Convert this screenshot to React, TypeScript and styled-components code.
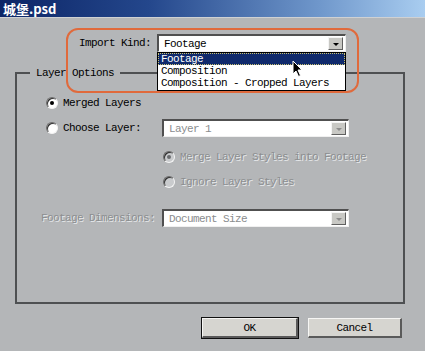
import React from 'react';
import styled, { createGlobalStyle, css } from 'styled-components';

const GlobalStyle = createGlobalStyle`
    html, body {
        margin: 0;
        padding: 0;
        background: #b4b6b8;
    }
    body {
        font-family: "Liberation Mono", "DejaVu Sans Mono", monospace;
        font-size: 11px;
        letter-spacing: -0.6px;
        color: #000;
    }
`;

const Window = styled.div`
    position: relative;
    width: 425px;
    height: 351px;
    overflow: hidden;
    background: #b4b6b8;
    display: flex;
    flex-direction: column;
`;

const TitleBar = styled.div`
    height: 18px;
    display: flex;
    align-items: center;
    padding-left: 3px;
    background: linear-gradient(90deg, #0c2566 0%, #24478c 35%, #6f97cb 75%, #a9cdf0 100%);
    border-bottom: 1px solid #cfd1d3;
    box-sizing: border-box;
`;

const Title = styled.span`
    font-family: "Noto Sans CJK SC", "Noto Sans", sans-serif;
    font-weight: 700;
    font-size: 13px;
    letter-spacing: 0;
    color: #fff;
    line-height: 1;
`;

const Body = styled.div`
    padding-top: 16px;
    display: flex;
    flex-direction: column;
`;

const ImportRow = styled.div`
    display: flex;
    align-items: center;
    gap: 6px;
    margin-left: 79px;
`;

const Label = styled.span<{ $disabled?: boolean; $width?: number }>`
    white-space: nowrap;
    line-height: 14px;
    ${(p) => p.$width && css`width: ${p.$width}px; flex: none;`}
    ${(p) =>
        p.$disabled &&
        css`
            color: #8c8e90;
            text-shadow: 1px 1px 0 #e6e8ea;
        `}
`;

const SelectWrap = styled.div`
    position: relative;
    flex: none;
`;

const SelectBox = styled.div<{ $width: number; $disabled?: boolean }>`
    width: ${(p) => p.$width}px;
    height: 18px;
    box-sizing: border-box;
    background: #fff;
    border-top: 2px solid #505050;
    border-left: 2px solid #505050;
    border-right: 1px solid #f0f0f0;
    border-bottom: 1px solid #f0f0f0;
    display: flex;
    align-items: center;
    padding-left: 5px;
    color: ${(p) => (p.$disabled ? '#8a8c8e' : '#000')};
`;

const SelectText = styled.span`
    flex: 1;
    line-height: 14px;
`;

const DropButton = styled.div<{ $disabled?: boolean }>`
    width: 15px;
    height: 13px;
    margin-right: 2px;
    box-sizing: border-box;
    background: #c8c8c4;
    border-top: 1px solid #f4f4f4;
    border-left: 1px solid #f4f4f4;
    border-right: 1px solid #606060;
    border-bottom: 1px solid #606060;
    display: flex;
    align-items: center;
    justify-content: center;

    &::after {
        content: '';
        border-left: 3px solid transparent;
        border-right: 3px solid transparent;
        border-top: 3px solid ${(p) => (p.$disabled ? '#8c8c8c' : '#000')};
        margin-top: 1px;
    }
`;

const DropList = styled.div`
    position: absolute;
    top: 18px;
    left: 0;
    width: 189px;
    box-sizing: border-box;
    background: #fff;
    border: 1px solid #000;
    padding: 0 0 1px;
    z-index: 2;
`;

const DropItem = styled.div<{ $active?: boolean }>`
    height: 12px;
    line-height: 12px;
    padding-left: 3px;
    white-space: nowrap;
    box-sizing: border-box;
    ${(p) =>
        p.$active &&
        css`
            background: #102a6c;
            color: #fff;
            outline: 1px dotted #c8c070;
            outline-offset: -1px;
        `}
`;

const Group = styled.fieldset`
    margin: 14px 20px 0 15px;
    padding: 0;
    min-width: 0;
    border: 2px solid #4e5052;
`;

const Legend = styled.legend`
    margin-left: 13px;
    padding: 0 6px;
    line-height: 14px;
`;

const GroupInner = styled.div`
    display: flex;
    flex-direction: column;
    padding: 14px 0 75px 29px;
`;

const Row = styled.div<{ $indent?: number; $gap?: number }>`
    display: flex;
    align-items: center;
    height: 18px;
    margin-left: ${(p) => p.$indent ?? 0}px;
    margin-top: ${(p) => p.$gap ?? 0}px;
`;

const Radio = styled.span<{ $checked?: boolean; $disabled?: boolean }>`
    width: 12px;
    height: 12px;
    flex: none;
    box-sizing: border-box;
    border-radius: 50%;
    margin-right: 5px;
    background: ${(p) => (p.$disabled ? '#c9cbcd' : '#fff')};
    border: 1px solid;
    border-color: #6a6a6a #f4f4f4 #f4f4f4 #6a6a6a;
    box-shadow: inset 1px 1px 0 #303030;
    display: flex;
    align-items: center;
    justify-content: center;

    &::after {
        content: '';
        display: ${(p) => (p.$checked ? 'block' : 'none')};
        width: 4px;
        height: 4px;
        border-radius: 50%;
        background: ${(p) => (p.$disabled ? '#6a6c6e' : '#000')};
    }
`;

const ButtonRow = styled.div`
    display: flex;
    justify-content: flex-end;
    gap: 10px;
    margin: 14px 23px 0 0;
`;

const Button = styled.div<{ $default?: boolean }>`
    width: ${(p) => (p.$default ? 96 : 94)}px;
    height: 20px;
    box-sizing: border-box;
    background: #d6d5d0;
    border-top: 1px solid #f6f6f4;
    border-left: 1px solid #f6f6f4;
    border-right: 2px solid #5a5a5a;
    border-bottom: 2px solid #5a5a5a;
    display: flex;
    align-items: center;
    justify-content: center;
    line-height: 14px;
    ${(p) =>
        p.$default &&
        css`
            outline: 1px solid #111;
        `}
`;

const Highlight = styled.div`
    position: absolute;
    left: 66px;
    top: 28px;
    width: 293px;
    height: 65px;
    box-sizing: border-box;
    border: 2px solid #e06a3c;
    border-radius: 12px;
    pointer-events: none;
    z-index: 3;
`;

const Cursor = styled.svg`
    position: absolute;
    left: 292px;
    top: 60px;
    z-index: 4;
`;

export default function App() {
    return (
        <Window>
            <GlobalStyle />
            <TitleBar>
                <Title>城堡.psd</Title>
            </TitleBar>
            <Body>
                <ImportRow>
                    <Label>Import Kind:</Label>
                    <SelectWrap>
                        <SelectBox $width={189}>
                            <SelectText>Footage</SelectText>
                            <DropButton />
                        </SelectBox>
                        <DropList>
                            <DropItem $active>Footage</DropItem>
                            <DropItem>Composition</DropItem>
                            <DropItem>Composition - Cropped Layers</DropItem>
                        </DropList>
                    </SelectWrap>
                </ImportRow>

                <Group>
                    <Legend>Layer Options</Legend>
                    <GroupInner>
                        <Row>
                            <Radio $checked />
                            <Label>Merged Layers</Label>
                        </Row>
                        <Row $gap={7}>
                            <Radio />
                            <Label $width={99}>Choose Layer:</Label>
                            <SelectBox $width={187} $disabled>
                                <SelectText>Layer 1</SelectText>
                                <DropButton $disabled />
                            </SelectBox>
                        </Row>
                        <Row $indent={117} $gap={11}>
                            <Radio $checked $disabled />
                            <Label $disabled>Merge Layer Styles into Footage</Label>
                        </Row>
                        <Row $indent={117} $gap={7}>
                            <Radio $disabled />
                            <Label $disabled>Ignore Layer Styles</Label>
                        </Row>
                        <Row $indent={-5} $gap={18}>
                            <Label $disabled $width={121}>
                                Footage Dimensions:
                            </Label>
                            <SelectBox $width={187} $disabled>
                                <SelectText>Document Size</SelectText>
                                <DropButton $disabled />
                            </SelectBox>
                        </Row>
                    </GroupInner>
                </Group>

                <ButtonRow>
                    <Button $default>OK</Button>
                    <Button>Cancel</Button>
                </ButtonRow>
            </Body>

            <Highlight />
            <Cursor width="12" height="18" viewBox="0 0 12 18">
                <path d="M1 1 L1 14 L4 11 L6.5 16.5 L8.5 15.5 L6 10 L10 10 Z" fill="#000" stroke="#fff" strokeWidth="1" />
            </Cursor>
        </Window>
    );
}
